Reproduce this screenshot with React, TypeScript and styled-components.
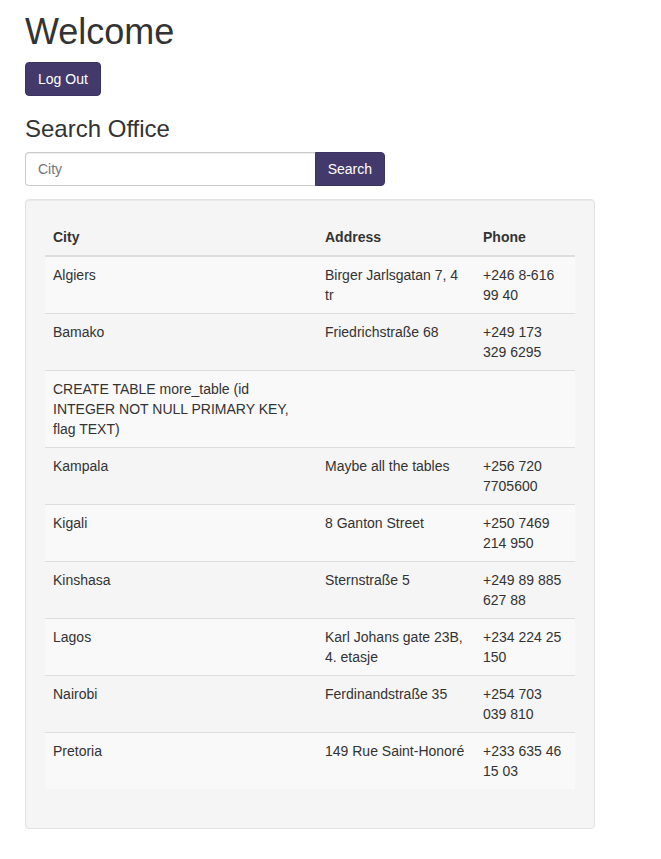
import styled, { createGlobalStyle } from 'styled-components';

const GlobalStyle = createGlobalStyle`
  body {
    margin: 0;
    background: #ffffff;
    font-family: "Liberation Sans", Arial, sans-serif;
    font-size: 14px;
    line-height: 1.42857;
    color: #333333;
  }
  * {
    box-sizing: border-box;
  }
`

const Page = styled.div`
  width: 570px;
  margin-left: 25px;
  padding-top: 12px;
`

const Title = styled.h1`
  margin: 0 0 10px;
  font-size: 36px;
  font-weight: 500;
  line-height: 1.1;
`

const Subtitle = styled.h3`
  margin: 20px 0 10px;
  font-size: 24px;
  font-weight: 500;
  line-height: 1.1;
`

const PrimaryButton = styled.button<{ $attached?: boolean }>`
  display: inline-block;
  height: 34px;
  padding: 6px 12px;
  font-family: inherit;
  font-size: 14px;
  line-height: 20px;
  color: #ffffff;
  background: #433a6b;
  border: 1px solid #3b3360;
  border-radius: ${p => p.$attached ? '0 4px 4px 0' : '4px'};
  cursor: pointer;
`

const SearchForm = styled.form`
  display: flex;
  width: 360px;
  margin-bottom: 13px;
`

const CityInput = styled.input`
  flex: 1;
  height: 34px;
  padding: 6px 12px;
  font-family: inherit;
  font-size: 14px;
  color: #555555;
  border: 1px solid #cccccc;
  border-right: 0;
  border-radius: 4px 0 0 4px;
  box-shadow: inset 0 1px 1px rgba(0, 0, 0, 0.075);
  outline: none;

  ::placeholder {
    color: #999999;
  }
`

const Well = styled.div`
  padding: 19px;
  background: #f5f5f5;
  border: 1px solid #e3e3e3;
  border-radius: 4px;
  box-shadow: inset 0 1px 1px rgba(0, 0, 0, 0.05);
`

const Table = styled.table`
  width: 100%;
  margin-bottom: 20px;
  border-collapse: collapse;
  border-spacing: 0;
  table-layout: fixed;
`

const HeadCell = styled.th`
  padding: 8px;
  text-align: left;
  font-weight: bold;
  line-height: 20px;
  vertical-align: bottom;
  border-bottom: 2px solid #dddddd;
`

const Row = styled.tr`
  &:nth-child(odd) {
    background: #f9f9f9;
  }
`

const Cell = styled.td`
  padding: 8px;
  line-height: 20px;
  vertical-align: top;
  border-top: 1px solid #dddddd;
`

const offices = [
  { city: 'Algiers', address: 'Birger Jarlsgatan 7, 4 tr', phone: '+246 8-616 99 40' },
  { city: 'Bamako', address: 'Friedrichstraße 68', phone: '+249 173 329 6295' },
  { city: 'CREATE TABLE more_table (id INTEGER NOT NULL PRIMARY KEY, flag TEXT)', address: '', phone: '' },
  { city: 'Kampala', address: 'Maybe all the tables', phone: '+256 720 7705600' },
  { city: 'Kigali', address: '8 Ganton Street', phone: '+250 7469 214 950' },
  { city: 'Kinshasa', address: 'Sternstraße 5', phone: '+249 89 885 627 88' },
  { city: 'Lagos', address: 'Karl Johans gate 23B, 4. etasje', phone: '+234 224 25 150' },
  { city: 'Nairobi', address: 'Ferdinandstraße 35', phone: '+254 703 039 810' },
  { city: 'Pretoria', address: '149 Rue Saint-Honoré', phone: '+233 635 46 15 03' },
]

export default function App() {
  return (
    <Page>
      <GlobalStyle />
      <Title>Welcome</Title>
      <PrimaryButton type='button'>Log Out</PrimaryButton>

      <Subtitle>Search Office</Subtitle>
      <SearchForm onSubmit={e => e.preventDefault()}>
        <CityInput placeholder='City' />
        <PrimaryButton type='submit' $attached>Search</PrimaryButton>
      </SearchForm>

      <Well>
        <Table>
          <colgroup>
            <col style={{ width: 272 }} />
            <col style={{ width: 158 }} />
            <col style={{ width: 100 }} />
          </colgroup>
          <thead>
            <tr>
              <HeadCell>City</HeadCell>
              <HeadCell>Address</HeadCell>
              <HeadCell>Phone</HeadCell>
            </tr>
          </thead>
          <tbody>
            {offices.map(o => (
              <Row key={o.city}>
                <Cell>{o.city}</Cell>
                <Cell>{o.address}</Cell>
                <Cell>{o.phone}</Cell>
              </Row>
            ))}
          </tbody>
        </Table>
      </Well>
    </Page>
  );
}
